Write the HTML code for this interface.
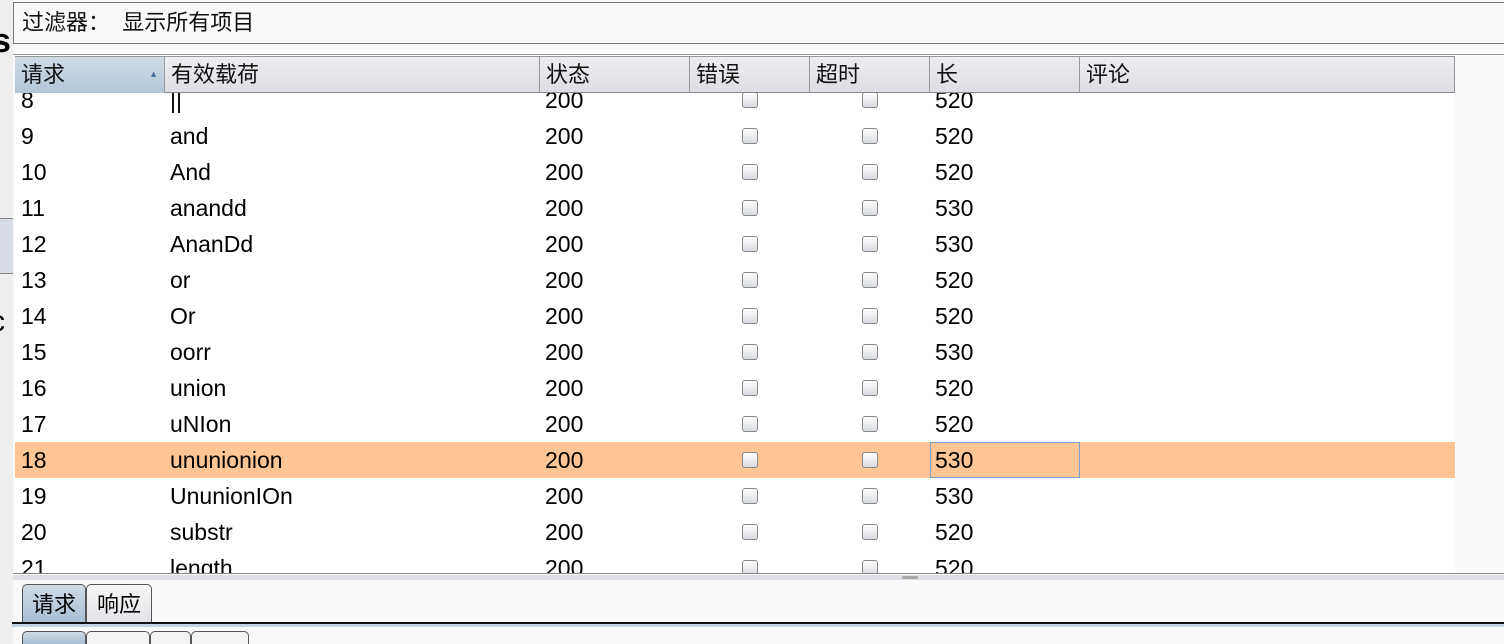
<!DOCTYPE html>
<html style="height:644px;overflow:hidden"><head><meta charset="utf-8"><style>
html,body{overflow:hidden}
body{margin:0;width:1504px;height:644px;overflow:hidden;background:#f9f9f9;font-family:"Liberation Sans","Noto Sans CJK SC",sans-serif;position:relative}
.abs{position:absolute}
.filter{left:13px;top:2px;width:1491px;height:42px;border:1px solid #777;border-right:none;background:#f9f9f9;font-size:22px;line-height:40px;color:#111;box-sizing:border-box;padding-left:8px}
.tbl{left:15px;top:56px;width:1440px;height:517px;overflow:hidden;background:#fff}
.hdr{position:absolute;top:0;left:0;width:1440px;height:37px;background:linear-gradient(#eceef1,#dcdee3);border-bottom:1px solid #888;border-top:1px solid #999;box-sizing:border-box;z-index:2}
.hdr div{position:absolute;top:0;height:36px;border-right:1px solid #999;box-sizing:border-box;font-size:22px;line-height:35px;padding-left:6px;color:#111}
.row{position:absolute;left:0;width:1440px;height:36px;font-size:23px;line-height:36px;color:#000}
.row span{position:absolute;top:0}
.cb{position:absolute;top:10px;width:16px;height:16px;border:1px solid #888;border-radius:3px;background:linear-gradient(#fff,#d8dbe0);box-sizing:border-box}
.sel{background:#ffc594}
.tab{position:absolute;height:38px;border:1px solid #555;border-bottom:none;border-radius:5px 5px 0 0;font-size:22px;line-height:40px;text-align:center;box-sizing:border-box;overflow:hidden}
</style></head><body>
<div class="abs" style="left:0;top:0;width:13px;height:644px;background:#eee"></div>
<div class="abs" style="left:0;top:218px;width:13px;height:54px;background:#d8dce6;border-top:1px solid #888;border-bottom:1px solid #888"></div>
<div class="abs" style="left:-8px;top:22px;font-size:34px;font-weight:bold">s</div>
<div class="abs" style="left:-10px;top:305px;font-size:30px">c</div>
<div class="abs filter">过滤器：&nbsp;&nbsp;显示所有项目</div>
<div class="abs" style="left:13px;top:54px;width:1491px;height:1px;background:#999"></div>
<div class="abs tbl">
<div class="hdr">
<div style="left:0;width:150px;background:linear-gradient(#cfdbe6,#b3c6d6)">请求<span style="position:absolute;right:6px;top:0;font-size:9px;color:#4a6f9a">▲</span></div>
<div style="left:150px;width:375px">有效载荷</div>
<div style="left:525px;width:150px">状态</div>
<div style="left:675px;width:120px">错误</div>
<div style="left:795px;width:120px">超时</div>
<div style="left:915px;width:150px">长</div>
<div style="left:1065px;width:375px">评论</div>
</div>
<div id="rows"></div>
</div>
<div class="abs" style="left:13px;top:573px;width:1491px;height:1px;background:#888"></div>
<div class="abs" style="left:13px;top:575px;width:1491px;height:5px;background:#dcdee3"></div>
<div class="abs" style="left:902px;top:576px;width:16px;height:3px;background:#aaa;border-radius:2px"></div>
<div class="tab" style="left:22px;top:584px;width:64px;background:linear-gradient(#cfdbe6,#a9bfd3)">请求</div>
<div class="tab" style="left:86px;top:584px;width:66px;background:linear-gradient(#f6f6f6,#e2e4e8)">响应</div>
<div class="abs" style="left:12px;top:622px;width:1492px;height:2px;background:#111"></div>
<div class="abs" style="left:12px;top:624px;width:1492px;height:3px;background:#c3d3e3"></div>
<div class="tab" style="left:22px;top:631px;width:64px;height:13px;background:linear-gradient(#cfdbe6,#a9bfd3)"></div>
<div class="tab" style="left:86px;top:631px;width:64px;height:13px;background:#f3f3f3"></div>
<div class="tab" style="left:150px;top:631px;width:41px;height:13px;background:#f3f3f3"></div>
<div class="tab" style="left:191px;top:631px;width:58px;height:13px;background:#f3f3f3"></div>
<script>
var d=[[8,"||",520],[9,"and",520],[10,"And",520],[11,"anandd",530],[12,"AnanDd",530],[13,"or",520],[14,"Or",520],[15,"oorr",530],[16,"union",520],[17,"uNIon",520],[18,"ununionion",530],[19,"UnunionIOn",530],[20,"substr",520],[21,"length",520]];
var h="";d.forEach(function(r,i){var t=26+i*36;var s=r[0]==18;
h+='<div class="row'+(s?' sel':'')+'" style="top:'+t+'px"><span style="left:6px">'+r[0]+'</span><span style="left:155px">'+r[1]+'</span><span style="left:530px">200</span><div class="cb" style="left:727px"></div><div class="cb" style="left:847px"></div>'+(s?'<div style="position:absolute;left:915px;top:0;width:150px;height:36px;border:1px solid #7a9fc8;box-sizing:border-box"></div>':'')+'<span style="left:920px">'+r[2]+'</span></div>';});
document.getElementById("rows").innerHTML=h;
</script>
</body></html>
